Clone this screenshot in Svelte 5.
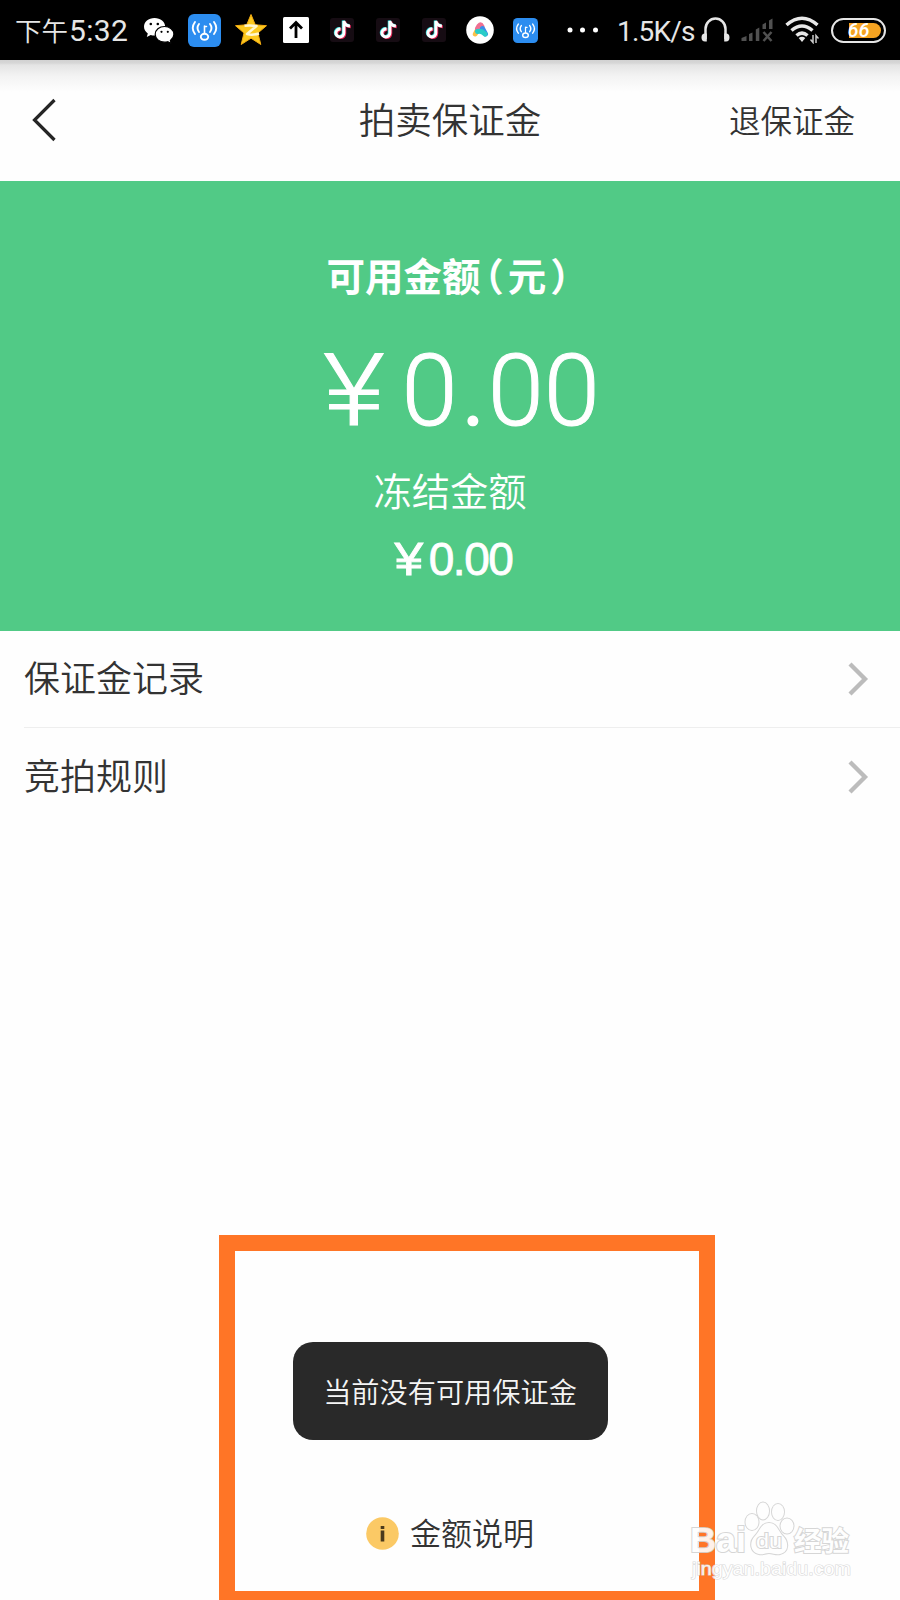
<script lang="ts">
  const rows = ["保证金记录", "竞拍规则"];
  const videoIcons = [1, 2, 3];
</script>

{#snippet wifiKey(size: number)}
  <svg class="icon" width={size} height={size} viewBox="0 0 33 33">
    <rect width="33" height="33" rx="6" fill="#2c8df0" />
    <g fill="none" stroke="#fff" stroke-width="1.9" stroke-linecap="round">
      <path d="M7 8q-4.500 6 0 12M11 10q-3 4 0 8M26 8q4.500 6 0 12M22 10q3 4 0 8" />
      <ellipse cx="16.500" cy="22.800" rx="3.700" ry="3" />
      <path d="M16.500 19v-7M16.500 12.500h2" stroke-width="1.600" />
    </g>
  </svg>
{/snippet}

<div class="screen">
  <div class="status">
    <span class="time"><span class="ampm">下午</span>5:32</span>

    <svg class="icon wechat" width="32" height="27" viewBox="0 0 32 27">
      <path d="M11.500 1C5.500 1 1 4.900 1 9.800c0 2.800 1.500 5.100 3.800 6.700l-1 3.500 3.900-2c1.200.4 2.500.6 3.800.6 6 0 10.700-3.900 10.700-8.800S17.500 1 11.500 1z" fill="#fff" />
      <path d="M21.500 9.500c-5.200 0-9.300 3.400-9.300 7.800s4.100 7.900 9.300 7.900c1.100 0 2.200-.2 3.200-.5l3.600 1.800-.9-3.100c2.100-1.500 3.500-3.600 3.500-6.100 0-4.400-4.200-7.800-9.400-7.800z" fill="#fff" stroke="#000" stroke-width="1.200" />
      <g fill="#000">
        <circle cx="7.800" cy="7" r="1.300" />
        <circle cx="14.800" cy="7" r="1.300" />
        <circle cx="18.500" cy="14.800" r="1.100" />
        <circle cx="24.800" cy="14.800" r="1.100" />
      </g>
    </svg>

    <span class="key">{@render wifiKey(33)}</span>

    <svg class="icon star" width="34" height="34" viewBox="0 0 34 34">
      <path d="M17 1.500l4.300 10.300 11.200.9-8.600 7.300 2.900 11.500L17 25.200l-9.800 6.300L10 20 1.500 12.700l11.200-.9z" fill="#fcc91e" stroke="#f3aa10" stroke-width="1" stroke-linejoin="round" />
      <path d="M10.500 12.800q6 -.8 12 .2l-9.500 8q5.500 1.500 12-.5" fill="none" stroke="#fff6d0" stroke-width="2.500" stroke-linejoin="round" />
    </svg>

    <svg class="icon upload" width="26" height="26" viewBox="0 0 26 26">
      <rect width="26" height="26" rx="1.500" fill="#fff" />
      <path d="M13 21V6M7 11.500l6-6 6 6" fill="none" stroke="#000" stroke-width="2.800" />
    </svg>

    {#each videoIcons as item (item)}
      <svg class="icon video" width="24" height="24" viewBox="0 0 24 24">
        <rect width="24" height="24" rx="3" fill="#160c13" />
        <g fill="none" stroke-width="2.900">
          <path d="M10.500 11a4 4 0 1 0 3.400 4V3q.8 4.600 6 5" stroke="#e8285a" transform="translate(.9 .7)" />
          <path d="M10.500 11a4 4 0 1 0 3.400 4V3q.8 4.600 6 5" stroke="#35dfe0" transform="translate(-.7 -.5)" />
          <path d="M10.500 11a4 4 0 1 0 3.400 4V3q.8 4.600 6 5" stroke="#fff" />
        </g>
      </svg>
    {/each}

    <svg class="icon assistant" width="28" height="28" viewBox="0 0 28 28">
      <circle cx="14" cy="14" r="13.800" fill="#fff" />
      <g fill="none" stroke-width="5" stroke-linecap="round">
        <path d="M9.300 18l1.500-3" stroke="#fbc04a" />
        <path d="M11.500 12.500q2.500-6 4.500-2" stroke="#ee6f92" />
        <path d="M16.500 12.500l3 5.500" stroke="#3a8ce8" />
        <path d="M11.500 15.500q4-1 7.500 2.500" stroke="#2accc8" />
      </g>
    </svg>

    <span class="key-small">{@render wifiKey(25)}</span>

    <svg class="icon dots" width="32" height="6" viewBox="0 0 32 6">
      <g fill="#fff">
        <circle cx="3" cy="3" r="2.500" />
        <circle cx="15.500" cy="3" r="2.500" />
        <circle cx="28.500" cy="3" r="2.500" />
      </g>
    </svg>

    <span class="speed">1.5K/s</span>

    <svg class="icon headphone" width="29" height="26" viewBox="0 0 29 26">
      <path d="M4.500 22V12a10 10.500 0 0 1 20 0v10" fill="none" stroke="#e6e6e6" stroke-width="2.500" />
      <path d="M5.800 16.500v8H4q-3.500 0-3.500-4t3.500-4zM23.200 16.500v8H25q3.500 0 3.500-4t-3.500-4z" fill="#e6e6e6" />
    </svg>

    <svg class="icon signal" width="32" height="24" viewBox="0 0 32 24">
      <path d="M.5 23v-3l5-2v5zM8 23v-7l3.500-1.500V23zM14.800 23V11.500l3.500-2V23zM21.500 11V6.500l3.500-2V11zM28 11V2.500L31.500.5V11z" fill="#515151" />
      <path d="M22.500 14l8 9M30.500 14l-8 9" stroke="#515151" stroke-width="2.500" />
    </svg>

    <svg class="icon wifi" width="34" height="28" viewBox="0 0 34 28">
      <g fill="none" stroke="#e8e8e8" stroke-width="3.500">
        <path d="M1.500 9q15.500-13.500 31 0" />
        <path d="M6.500 14.500q10.500-9 21 0" />
        <path d="M11.500 19.500q5.500-4.800 11 0" />
      </g>
      <path d="M17 26l-3.300-4q3.300-2.500 6.600 0z" fill="#e8e8e8" />
      <path d="M28 19v7.500l-2.500-3M31 27v-7.500l2.500 3" fill="none" stroke="#ccc" stroke-width="1.500" />
    </svg>

    <div class="battery">
      <div class="charge"></div>
      <span class="level">66</span>
    </div>
  </div>

  <header class="nav">
    <svg class="back" width="26" height="44" viewBox="0 0 26 44">
      <path d="M23.500 2L3.500 22l20 20" fill="none" stroke="#252525" stroke-width="3.200" />
    </svg>
    <h1>拍卖保证金</h1>
    <span class="refund">退保证金</span>
  </header>

  <section class="balance">
    <p class="label">可用金额<span class="open">（</span>元<span class="close">）</span></p>
    <p class="amount"><span class="yen">¥</span>0<span class="point">.</span>00</p>
    <p class="frozen-label">冻结金额</p>
    <p class="frozen"><span class="yen">¥</span>0.00</p>
  </section>

  <ul class="list">
    {#each rows as row}
      <li>
        <span>{row}</span>
        <svg width="22" height="36" viewBox="0 0 22 36">
          <path d="M3 3l15 15L3 33" fill="none" stroke="#bcbcbc" stroke-width="4.300" />
        </svg>
      </li>
    {/each}
  </ul>

  <div class="toast">当前没有可用保证金</div>

  <footer class="note">
    <svg width="33" height="33" viewBox="0 0 33 33">
      <circle cx="16.500" cy="16.500" r="16.300" fill="#fbc965" />
      <path d="M14.700 9h3.600v3h-3.600zM14.700 13.500h3.600v11h-3.600z" fill="#4b3a1c" />
    </svg>
    <span>金额说明</span>
  </footer>

  <div class="highlight"></div>

  <svg class="watermark" width="170" height="100" viewBox="0 0 170 100">
    <g fill="#fff" stroke="#d2d2d2" stroke-width="2" paint-order="stroke">
      <text class="brand" x="4" y="62" font-size="35" textLength="56" lengthAdjust="spacingAndGlyphs">Bai</text>
      <ellipse cx="66" cy="32" rx="6.500" ry="8" />
      <ellipse cx="77" cy="21" rx="6" ry="8.500" />
      <ellipse cx="92" cy="22" rx="6" ry="8" />
      <ellipse cx="101" cy="36" rx="6.500" ry="7.500" />
      <path d="M83 33c-8 0-9 8-14 13-6 6-5 16 4 18 4 1 6-1 10-1s7 2 11 1c9-2 9-12 3-18-5-5-6-13-14-13z" />
      <text class="du" x="70" y="58" font-size="21" textLength="26" lengthAdjust="spacingAndGlyphs">du</text>
      <text class="brand cn" x="108" y="61" font-size="27" textLength="55" lengthAdjust="spacingAndGlyphs">经验</text>
    </g>
    <text class="url" x="6" y="85" textLength="159" lengthAdjust="spacingAndGlyphs">jingyan.baidu.com</text>
  </svg>
</div>

<style>
  :global(body) {
    margin: 0;
    background: #fff;
  }

  .screen {
    position: relative;
    display: flex;
    flex-direction: column;
    width: 900px;
    height: 1600px;
    overflow: hidden;
    background: #fefefe;
    color: #333;
    font-family: "Noto Sans CJK SC", sans-serif;
    font-weight: 350;
  }

  p,
  h1,
  ul {
    margin: 0;
    padding: 0;
    font-weight: 350;
  }

  svg {
    display: block;
    flex-shrink: 0;
  }

  .status {
    display: flex;
    align-items: center;
    box-sizing: border-box;
    height: 60px;
    padding-left: 15px;
    background: #000;
    color: #e6e6e6;
    white-space: nowrap;
  }

  .time {
    display: flex;
    align-items: center;
    box-sizing: border-box;
    width: 128px;
    padding-top: 2px;
    font: 400 30px/58px Roboto, sans-serif;
    letter-spacing: 0.3px;
  }

  .ampm {
    width: 54px;
    margin-top: -2px;
    font: 350 26.500px/58px "Noto Sans CJK SC", sans-serif;
    letter-spacing: 0;
  }

  .key,
  .star {
    margin-left: 13px;
  }

  .upload {
    margin-left: 15px;
  }

  .upload + .video {
    margin-left: 21px;
  }

  .video + .video {
    margin-left: 22px;
  }

  .assistant {
    margin-left: 20px;
  }

  .key-small {
    margin-left: 19px;
  }

  .dots {
    margin-left: 29px;
  }

  .speed {
    width: 84px;
    margin-left: 18px;
    padding-top: 3px;
    font: 400 28px/58px Roboto, sans-serif;
    letter-spacing: -0.8px;
  }

  .signal {
    margin-left: 11px;
  }

  .wifi {
    margin-left: 12px;
  }

  .battery {
    position: relative;
    display: flex;
    justify-content: flex-end;
    box-sizing: border-box;
    width: 55px;
    height: 25px;
    margin-left: 12px;
    padding: 3px;
    border: 2.500px solid #e6e6e6;
    border-radius: 13px;
  }

  .charge {
    width: 32px;
    border-radius: 0 8px 8px 0;
    background: #f5a321;
  }

  .level {
    position: absolute;
    inset: 0;
    color: #fff;
    font: italic 500 20px/21px Roboto, sans-serif;
    text-align: center;
  }

  .nav {
    display: grid;
    grid-template-columns: 1fr auto 1fr;
    align-items: center;
    height: 121px;
    padding: 0 45px 0 31px;
    background: linear-gradient(#d2d2d2 0, #d6d6d6 3px, #e4e4e4 5px, #f3f3f3 16px, #fefefe 32px);
  }

  .back {
    margin-top: -2px;
  }

  h1 {
    margin: -4px 0 0 14px;
    font-size: 36.500px;
    line-height: 60px;
  }

  .refund {
    justify-self: end;
    margin-top: -4px;
    font-size: 31.500px;
  }

  .balance {
    display: flex;
    flex-direction: column;
    align-items: center;
    height: 449.500px;
    background: #51ca86;
    color: #fff;
  }

  .label {
    margin-top: 63px;
    font-size: 38.500px;
    font-weight: 700;
    line-height: 60px;
    white-space: nowrap;
  }

  .open,
  .close {
    margin: 0 4px;
    font-feature-settings: "halt";
  }

  .yen {
    display: inline-block;
    transform: scaleX(1.12);
  }

  .amount {
    margin: 17px 0 0 28px;
    font: 300 101px/140px Roboto, sans-serif;
    -webkit-text-stroke: 1px #fff;
  }

  .amount .yen {
    margin-right: 21px;
    transform: scaleX(1.18);
  }

  .point {
    margin: 0 2px 0 4px;
    -webkit-text-stroke: 2.500px #fff;
  }

  .frozen-label {
    margin-top: -1px;
    font-size: 38.300px;
    line-height: 60px;
  }

  .frozen {
    margin: 9px 0 0 8px;
    font: 400 46px/60px "Liberation Sans", sans-serif;
    letter-spacing: -1.500px;
    -webkit-text-stroke: 0.800px #fff;
  }

  .frozen .yen {
    margin-right: 9px;
  }

  .list {
    list-style: none;
  }

  li {
    display: flex;
    align-items: center;
    justify-content: space-between;
    box-sizing: border-box;
    height: 97.500px;
    margin-left: 24px;
    padding-right: 31px;
    font-size: 36px;
    line-height: 60px;
  }

  li span {
    margin-top: -6px;
  }

  li:not(:last-child) {
    border-bottom: 1.500px solid #eee;
  }

  .toast {
    align-self: center;
    box-sizing: border-box;
    width: 315px;
    height: 98px;
    margin-top: 516px;
    border-radius: 20px;
    background: #292929;
    color: #f5f5f5;
    font-size: 28.200px;
    line-height: 97px;
    text-align: center;
  }

  .note {
    display: flex;
    align-items: center;
    gap: 12px;
    margin: 65px 0 0 366px;
    font-size: 31px;
    line-height: 60px;
  }

  .note span {
    margin: -3px 0 0 -1px;
  }

  /* marker frame drawn over the page */
  .highlight {
    position: absolute;
    top: 1235px;
    left: 219px;
    box-sizing: border-box;
    width: 496px;
    height: 372px;
    border: 16.500px solid #ff7526;
  }

  .watermark {
    position: absolute;
    top: 1490px;
    left: 686px;
    opacity: 0.9;
  }

  .brand {
    font-family: "Liberation Sans", sans-serif;
    font-weight: 700;
  }

  .du {
    font-family: "Liberation Sans", sans-serif;
  }

  .cn {
    font-family: "Noto Sans CJK SC", sans-serif;
  }

  .url {
    fill: #fff;
    stroke: #d6d6d6;
    stroke-width: 1.200px;
    paint-order: stroke;
    font-family: "Liberation Sans", sans-serif;
    font-size: 18px;
    font-weight: 400;
  }
</style>
